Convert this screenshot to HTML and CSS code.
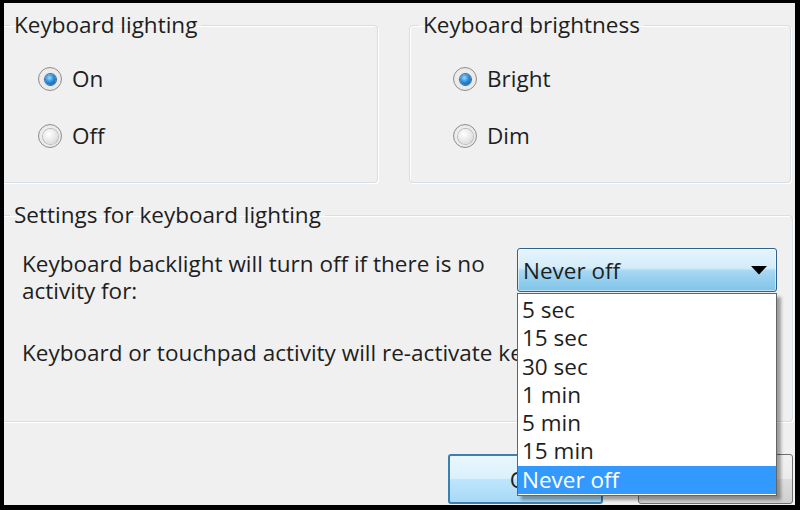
FILE: index.html
```html
<!DOCTYPE html>
<html>
<head>
<meta charset="utf-8">
<link rel="stylesheet" href="styles.css">
</head>
<body>
<div class="frame">
  <div class="top-row">
    <fieldset class="group group-left">
      <legend>Keyboard lighting</legend>
      <div class="radios">
        <div class="radio-row"><span class="radio checked"></span><span>On</span></div>
        <div class="radio-row"><span class="radio"></span><span>Off</span></div>
      </div>
    </fieldset>
    <fieldset class="group group-right">
      <legend>Keyboard brightness</legend>
      <div class="radios">
        <div class="radio-row"><span class="radio checked"></span><span>Bright</span></div>
        <div class="radio-row"><span class="radio"></span><span>Dim</span></div>
      </div>
    </fieldset>
  </div>
  <fieldset class="group group-settings">
    <legend>Settings for keyboard lighting</legend>
    <div class="settings-grid">
      <p class="desc">Keyboard backlight will turn off if there is no activity for:</p>
      <div class="combo-wrap">
        <div class="combo">
          <span>Never off</span>
          <svg class="arrow" width="16" height="9" viewBox="0 0 16 9"><polygon points="0,0 16,0 8,8.5" fill="#000"/></svg>
        </div>
        <ul class="dropdown">
          <li>5 sec</li>
          <li>15 sec</li>
          <li>30 sec</li>
          <li>1 min</li>
          <li>5 min</li>
          <li>15 min</li>
          <li class="selected">Never off</li>
        </ul>
      </div>
      <p class="note">Keyboard or touchpad activity will re-activate keyboard lighting.</p>
    </div>
  </fieldset>
  <div class="buttons">
    <div class="btn btn-default">OK</div>
    <div class="btn">Cancel</div>
  </div>
</div>
</body>
</html>
```
FILE: styles.css
```css
html, body {
  margin: 0;
  padding: 0;
  background: #ffffff;
}
.frame {
  width: 800px;
  height: 510px;
  box-sizing: border-box;
  border-style: solid;
  border-color: #000;
  border-width: 3px 5px 5px 4px;
  background: #f0f0f0;
  overflow: hidden;
  font-family: "Open Sans", "Noto Sans", sans-serif;
  font-size: 22.5px;
  color: #1e1e1e;
  position: relative;
}
.top-row {
  display: flex;
  gap: 31px;
  margin-top: 9px;
  margin-left: -8px;
}
.group {
  margin: 0;
  border: 1px solid #d5dfe5;
  border-radius: 4px;
  box-shadow: inset 1px 1px 0 #ffffff, 1px 1px 0 #ffffff;
  padding: 0;
  box-sizing: border-box;
}
.group legend {
  padding: 0 4px;
  margin-left: 13px;
  line-height: 26px;
}
.group-left, .group-right {
  width: 382px;
  height: 171px;
}
.group-right legend {
  margin-left: 9px;
}
.radios {
  display: flex;
  flex-direction: column;
  gap: 29px;
  padding: 27px 0 0 41px;
}
.group-right .radios {
  padding-left: 43px;
}
.radio-row {
  display: flex;
  align-items: center;
  gap: 10px;
  height: 28px;
  line-height: 28px;
}
.radio {
  width: 24px;
  height: 24px;
  box-sizing: border-box;
  border-radius: 50%;
  border: 1px solid #8f8f8f;
  background: radial-gradient(circle at 50% 50%, #d8d8d8 0, #f4f4f4 45%, #e6e6e6 70%, #c9c9c9 100%);
  display: flex;
  align-items: center;
  justify-content: center;
}
.radio::after {
  content: "";
  width: 15px;
  height: 15px;
  border-radius: 50%;
  background: radial-gradient(circle at 40% 35%, #ffffff 0, #e4e4e4 60%, #cfcfcf 100%);
  box-shadow: 0 0 0 1px #b9b9b9;
}
.radio.checked::after {
  width: 11px;
  height: 11px;
  background: radial-gradient(circle at 40% 35%, #9bd9ff 0, #2b8ad6 45%, #0b4f96 100%);
  box-shadow: 0 0 0 1px #3a6c99, 0 0 0 3px #e9e9e9;
}
.group-settings {
  margin: 19px 0 0 -8px;
  width: 797px;
  height: 220px;
}
.group-settings legend {
  margin-left: 13px;
}
.settings-grid {
  display: grid;
  grid-template-columns: 495px 260px;
  column-gap: 0;
  padding: 20px 0 0 25px;
}
.desc {
  margin: 0;
  line-height: 27px;
  padding-top: 1.5px;
  width: 475px;
}
.note {
  margin: 35px 0 0 0;
  line-height: 27px;
  white-space: nowrap;
  overflow: hidden;
}
.combo-wrap {
  position: relative;
}
.combo {
  height: 44px;
  box-sizing: border-box;
  border: 1px solid #2c628b;
  border-radius: 3px;
  background: linear-gradient(to bottom, #e6f4fc 0%, #d3ecf9 45%, #a8d8f2 52%, #7ec4e9 100%);
  box-shadow: inset 0 0 0 1px rgba(255,255,255,0.5);
  display: flex;
  align-items: center;
  justify-content: space-between;
  padding: 0 9px 0 5px;
}
.arrow {
  display: block;
}
.dropdown {
  position: absolute;
  left: 0;
  top: 45px;
  width: 260px;
  margin: 0;
  padding: 2px 0 0 0;
  list-style: none;
  background: #ffffff;
  border: 1px solid #646464;
  box-sizing: border-box;
  height: 203px;
  box-shadow: 4px 4px 3px rgba(0,0,0,0.35);
  z-index: 2;
}
.dropdown li {
  height: 28.3px;
  line-height: 28.3px;
  padding-left: 4px;
}
.dropdown li.selected {
  background: #3399ff;
  color: #ffffff;
}
.buttons {
  display: flex;
  justify-content: flex-end;
  gap: 35px;
  margin-top: 32px;
  padding-right: 2px;
}
.btn {
  width: 155px;
  height: 50px;
  box-sizing: border-box;
  border: 1px solid #707070;
  border-radius: 3px;
  background: linear-gradient(to bottom, #f2f2f2 0%, #ebebeb 50%, #dddddd 51%, #cfcfcf 100%);
  display: flex;
  align-items: center;
  justify-content: center;
  flex-shrink: 0;
}
.btn-default {
  border: 2px solid #3c7fb1;
  background: linear-gradient(to bottom, #eaf6fd 0%, #d9f0fc 50%, #bee6fd 51%, #a7d9f5 100%);
}
```
